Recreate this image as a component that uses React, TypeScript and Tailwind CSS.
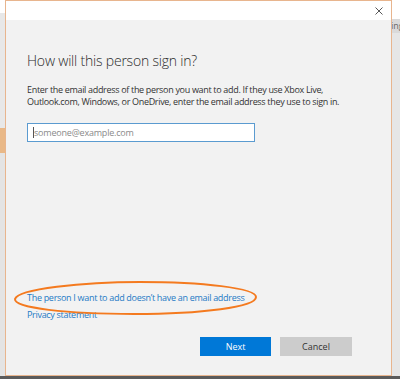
export default function App() {
  const font = { fontFamily: '"Open Sans", "Noto Sans", sans-serif' };
  return (
    <div className="w-[400px] h-[379px] overflow-hidden flex flex-col bg-[#5b5b5b]" style={font}>
      <div className="flex h-[376px]">
        {/* window behind, left edge */}
        <div className="w-[5px] flex flex-col">
          <div className="h-[13px] bg-white" />
          <div className="h-[115px] bg-[#e8e8e8]" />
          <div className="h-[25px] bg-[#e9b887]" />
          <div className="flex-1 bg-[#e4e4e4]" />
        </div>

        {/* dialog */}
        <div className="w-[387px] h-full border border-[#e8b58e] bg-[#f2f2f2] flex flex-col">
          <div className="h-[19px] bg-white flex items-center justify-end pr-[8px]">
            <svg width="8" height="8" viewBox="0 0 8 8" className="mt-[1px]">
              <path d="M0.5 0.5 L7.5 7.5 M7.5 0.5 L0.5 7.5" stroke="#444" strokeWidth="0.9" />
            </svg>
          </div>

          <div className="flex-1 flex flex-col px-[21px]">
            <h1 className="mt-[31px] text-[14px] leading-[20px] font-light text-[#2b2b2b] tracking-[-0.2px]">
              How will this person sign in?
            </h1>
            <p className="mt-[13px] text-[9px] leading-[11.5px] text-[#333] tracking-[-0.32px]">
              Enter the email address of the person you want to add. If they use Xbox Live,
              <br />
              Outlook.com, Windows, or OneDrive, enter the email address they use to sign in.
            </p>
            <div className="mt-[16px] w-[228px] h-[19px] border border-[#5b9bd0] bg-white flex items-center pl-[5px]">
              <span className="w-px h-[11px] bg-[#555]" />
              <span className="text-[9px] text-[#8a8a8a] tracking-[-0.2px]">someone@example.com</span>
            </div>

            <div className="flex-1" />

            <div className="relative flex flex-col gap-[5px] text-[9px] leading-[12px] text-[#1e7ac5] tracking-[-0.3px]">
              <span>The person I want to add doesn&#8217;t have an email address</span>
              <span>Privacy statement</span>
              <svg
                className="absolute left-[-15px] top-[-12px]"
                width="248"
                height="36"
                viewBox="0 0 248 36"
              >
                <path
                  d="M3 19 C 6 9, 70 2, 128 2 C 190 2, 244 8, 244 17 C 244 27, 190 34, 122 34 C 55 34, 2 28, 3 19 Z"
                  fill="none"
                  stroke="#f47a1f"
                  strokeWidth="2"
                />
              </svg>
            </div>

            <div className="mt-[16px] mb-[19px] flex gap-[9px] pl-[173px]">
              <button className="w-[71px] h-[19px] bg-[#0078d7] text-white text-[9px]">Next</button>
              <button className="w-[72px] h-[19px] bg-[#cccccc] text-[#333] text-[9px]">Cancel</button>
            </div>
          </div>
        </div>

        {/* window behind, right edge */}
        <div className="w-[8px] flex flex-col overflow-hidden">
          <div className="h-[19px] bg-white" />
          <div className="h-[14px] bg-[#dadada] flex items-center overflow-hidden">
            <span className="text-[9px] text-[#666] ml-[-1px] whitespace-nowrap">ing</span>
          </div>
          <div className="flex-1 bg-[#e6e6e6]" />
        </div>
      </div>
    </div>
  );
}
